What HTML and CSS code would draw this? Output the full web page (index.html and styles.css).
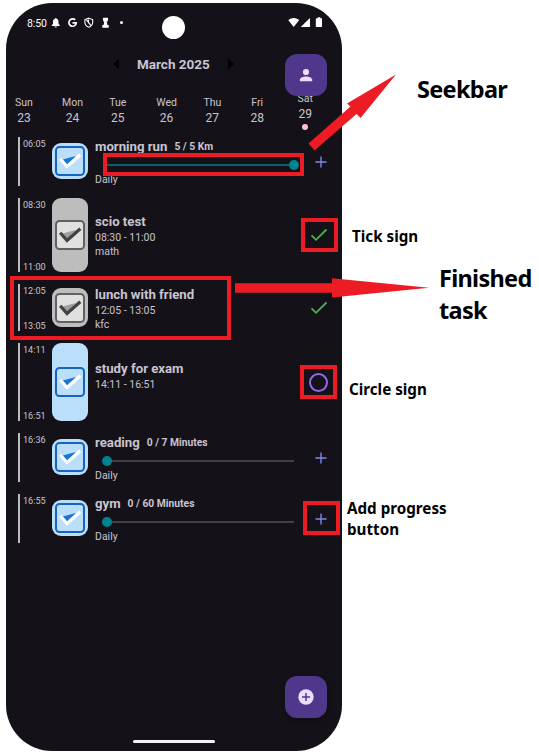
FILE: index.html
```
<!DOCTYPE html>
<html lang="en">
<head>
<meta charset="utf-8">
<title>March 2025 schedule</title>
<link rel="stylesheet" href="styles.css">
</head>
<body>
<svg width="0" height="0" class="defs" aria-hidden="true">
  <symbol id="task" viewBox="0 0 30 30">
    <rect class="box" x="1" y="1" width="28" height="28" rx="3.500"/>
    <path class="fill" d="M7.500 13.600 21 10 12 19.500z"/>
    <path class="tick" d="M5.200 12.800 12 20.500 25.300 8.800"/>
  </symbol>
  <symbol id="plus" viewBox="0 0 12 12"><path d="M6 .5v11M.5 6h11"/></symbol>
  <symbol id="done" viewBox="0 0 18 14"><path d="M1.500 7.300 6 11.800 16.500 1.500"/></symbol>
</svg>
<main class="canvas">
  <div class="phone">
    <header class="status">
      <span class="clock">8:50</span>
      <svg class="status-left" viewBox="0 0 76 12">
        <path fill="#fff" d="M.8 9V8L2 6.900V4.600C2 3 2.900 2 4.200 1.700V.9h1.200v.8C6.800 2 7.500 3 7.500 4.600v2.300L8.700 8v1zM3.600 9.500h2.300c0 1.300-2.300 1.300-2.300 0z"/>
        <path fill="none" stroke="#fff" stroke-width="1.700" d="M24.200 2.900A3.700 3.700 0 1 0 25.300 5.800H21.500"/>
        <path fill="none" stroke="#fff" stroke-width="1.100" d="M37.800 1.200 41.700 2.600V5.200C41.700 7.600 40.200 9.300 37.800 10.200 35.400 9.300 33.900 7.600 33.900 5.200V2.600zM35.500 2.800l4.300 5.500M37.500 2.500v3.800"/>
        <path fill="#fff" d="M52.300.8h4.400l.5 1.300-.6 2.500h-.9l.7 3.400h1.300v2.700h-6.400V8h1.300l.7-3.400h-.9l-.6-2.500z"/>
        <circle cx="70.500" cy="5.500" r="1.500" fill="#fff"/>
      </svg>
      <span class="camera"></span>
      <svg class="status-right" viewBox="0 0 34 12">
        <path fill="#fff" d="M.2 3Q5.700-1.200 11.200 3L5.700 10zM12.700 10 22 1v9zM28.500 1.300h1.200V.3h2.600v1h1.200q.7 0 .7.700v7.300q0 .7-.7.700h-5q-.7 0-.7-.7V2q0-.7.700-.7z"/>
      </svg>
    </header>
    <div class="month">
      <svg class="arrow" viewBox="0 0 6 12"><path d="M6 .5v11L0 6z"/></svg>
      <span>March 2025</span>
      <svg class="arrow" viewBox="0 0 6 12"><path d="M0 .5v11L6 6z"/></svg>
    </div>
    <div class="week">
      <div class="day"><span>Sun</span><b>23</b></div>
      <div class="day"><span>Mon</span><b>24</b></div>
      <div class="day"><span>Tue</span><b>25</b></div>
      <div class="day"><span>Wed</span><b>26</b></div>
      <div class="day"><span>Thu</span><b>27</b></div>
      <div class="day"><span>Fri</span><b>28</b></div>
      <div class="day today"><span>Sat</span><b>29</b><i></i></div>
    </div>
    <section class="tasks">
      <article class="row habit">
        <div class="times"><span>06:05</span></div>
        <div class="chip"><svg><use href="#task"/></svg></div>
        <div class="info">
          <div class="head"><h2>morning run</h2><em>5 / 5 Km</em></div>
          <div class="seek full"><i></i></div>
          <p>Daily</p>
        </div>
        <svg class="plus"><use href="#plus"/></svg>
      </article>
      <article class="row exam">
        <div class="times"><span>08:30</span><span>11:00</span></div>
        <div class="chip tall grey"><svg><use href="#task"/></svg></div>
        <div class="info"><h2>scio test</h2><p>08:30 - 11:00</p><p>math</p></div>
        <svg class="done"><use href="#done"/></svg>
      </article>
      <article class="row lunch">
        <div class="times"><span>12:05</span><span>13:05</span></div>
        <div class="chip mid grey"><svg><use href="#task"/></svg></div>
        <div class="info"><h2>lunch with friend</h2><p>12:05 - 13:05</p><p>kfc</p></div>
        <svg class="done"><use href="#done"/></svg>
      </article>
      <article class="row study">
        <div class="times"><span>14:11</span><span>16:51</span></div>
        <div class="chip tall"><svg><use href="#task"/></svg></div>
        <div class="info"><h2>study for exam</h2><p>14:11 - 16:51</p><p></p></div>
        <span class="ring"></span>
      </article>
      <article class="row habit">
        <div class="times"><span>16:36</span></div>
        <div class="chip"><svg><use href="#task"/></svg></div>
        <div class="info">
          <div class="head"><h2>reading</h2><em>0 / 7 Minutes</em></div>
          <div class="seek"><i></i></div>
          <p>Daily</p>
        </div>
        <svg class="plus"><use href="#plus"/></svg>
      </article>
      <article class="row habit">
        <div class="times"><span>16:55</span></div>
        <div class="chip"><svg><use href="#task"/></svg></div>
        <div class="info">
          <div class="head"><h2>gym</h2><em>0 / 60 Minutes</em></div>
          <div class="seek"><i></i></div>
          <p>Daily</p>
        </div>
        <svg class="plus"><use href="#plus"/></svg>
      </article>
    </section>
    <div class="home"></div>
    <div class="fab profile"><svg viewBox="0 0 14 14"><circle cx="7" cy="4" r="3.100"/><path d="M.8 13.200v-1.400c0-2.200 3.700-3.400 6.200-3.400s6.200 1.200 6.200 3.400v1.400z"/></svg></div>
    <div class="fab add"><svg viewBox="0 0 16 16"><circle cx="8" cy="8" r="7.700"/><path class="cross" d="M8 4v8M4 8h8"/></svg></div>
  </div>

  <div class="mark m-seek"></div>
  <div class="mark m-tick"></div>
  <div class="mark m-lunch"></div>
  <div class="mark m-ring"></div>
  <div class="mark m-plus"></div>
  <svg class="pointers" viewBox="0 0 539 755">
    <path d="M308.500 143.500 350.500 106.500 347 103.500 396 74.500 360.500 118 356.500 114 314.500 150.500z"/>
    <path d="M235 283.300H332V278.300L429 287.700 332 297.500V292.700H235z"/>
  </svg>
  <div class="label big l-seek">Seekbar</div>
  <div class="label l-tick">Tick sign</div>
  <div class="label big l-task">Finished<br>task</div>
  <div class="label l-ring">Circle sign</div>
  <div class="label l-add">Add progress<br>button</div>
</main>
</body>
</html>
```
FILE: styles.css
```
* { box-sizing: border-box; }
body { margin: 0; background: #fff; font-family: Roboto, sans-serif; }
.defs { position: absolute; }
.canvas { position: relative; width: 539px; height: 755px; padding: 3px 0 0 6px; overflow: hidden; }
.phone {
  position: relative; display: flex; flex-direction: column;
  width: 336px; height: 748px; border-radius: 46px;
  background: #141218; color: #cac4d0; overflow: hidden;
}

.status { display: flex; align-items: center; height: 40px; padding: 0 20px 0 21px; color: #fff; }
.clock { width: 24px; font-size: 10.5px; letter-spacing: -0.1px; }
.status-left { width: 76px; height: 12px; }
.camera { width: 23px; height: 23px; margin: 8px 0 0 35px; border-radius: 50%; background: #fff; }
.status-right { width: 34px; height: 12px; margin-left: auto; }

.month { display: flex; align-items: center; height: 42px; padding-left: 107px; font-size: 13.5px; font-weight: 700; }
.month span { width: 73px; margin: 0 18px; white-space: nowrap; }
.arrow { width: 6px; height: 12px; }

.week { display: grid; grid-template-columns: repeat(7, 47.1px); justify-items: start; height: 52px; padding: 11px 0 0 9px; }
.day { display: flex; flex-direction: column; align-items: center; font-size: 10.5px; line-height: 14px; }
.day b { font-size: 12px; font-weight: 400; line-height: 16px; }
.today { margin-top: -4px; }
.today i { width: 6px; height: 6px; margin-top: 2px; border-radius: 50%; background: #ffc0cb; }

.tasks { display: flex; flex-direction: column; gap: 12px; padding-left: 12px; }
.row { display: flex; align-items: center; height: 49px; border-left: 2px solid #bdbdbd; }
.exam { height: 74px; }
.lunch { height: 47px; }
.study { height: 78px; }
.times { display: flex; flex-direction: column; justify-content: space-between; align-self: stretch; width: 32px; padding: 1px 0 0 3px; font-size: 9.1px; line-height: 12px; }
.exam .times span + span, .lunch .times span + span, .study .times span + span { margin-bottom: -1px; }
.chip {
  --box: #1565c0; --boxfill: #bbdefb; --fill: #1976d2; --tick: #fff;
  display: grid; place-items: center; flex: none; width: 36px; height: 36px; border-radius: 9px; background: #bbdefb;
}
.habit .chip { margin-bottom: 1px; }
.chip svg { width: 30px; height: 30px; }
.chip.tall { height: 100%; }
.chip.mid { height: 39px; }
.chip.grey { --box: #616161; --boxfill: #e0e0e0; --fill: #9e9e9e; --tick: #424242; background: #bdbdbd; }
.box { fill: var(--boxfill); stroke: var(--box); stroke-width: 2px; }
.fill { fill: var(--fill); }
.tick { fill: none; stroke: var(--tick); stroke-width: 3.2px; }

.info { display: flex; flex-direction: column; justify-content: center; align-self: stretch; width: 206px; padding: 2px 0 0 7px; }
.head { display: flex; align-items: center; gap: 7px; height: 18px; white-space: nowrap; }
h2 { margin: 0; font-size: 13.2px; line-height: 17px; font-weight: 700; white-space: nowrap; }
em { font-size: 10.3px; font-weight: 700; font-style: normal; }
p { margin: 0; height: 14px; font-size: 10.5px; line-height: 14px; }
.info h2 + p { height: 15px; line-height: 15px; }
.habit .info { justify-content: flex-start; padding-top: 1px; }
.seek { display: flex; align-items: center; flex: none; width: 187px; height: 2px; margin: 9px 0 7px 12px; background: #414045; }
.seek i { width: 10px; height: 10px; margin-left: -5px; border-radius: 50%; background: #00838f; }
.seek.full { justify-content: flex-end; background: #07616b; }
.seek.full i { margin-right: -5px; }

.plus { width: 12px; height: 12px; margin-left: 21px; fill: none; stroke: #7c88ec; stroke-width: 1.4px; }
.done { width: 18px; height: 14px; margin-left: 16px; fill: none; stroke: #4caf50; stroke-width: 1.8px; }
.ring { width: 19px; height: 19px; margin-left: 15px; border: 2px solid #9466ed; border-radius: 50%; }

.home { width: 82px; height: 3px; margin: auto auto 8px 127px; border-radius: 2px; background: #f4f4f4; }
.fab { position: absolute; left: 279px; display: grid; place-items: center; width: 42px; height: 42px; border-radius: 12px; background: #4f378b; box-shadow: 0 2px 5px #0004; fill: #eaddff; }
.profile { top: 51px; box-shadow: none; }
.add { top: 672.5px; }
.profile svg { width: 14px; height: 14px; }
.add svg { width: 16px; height: 16px; }
.cross { stroke: #4f378b; stroke-width: 1.5px; }

.mark { position: absolute; border: 4px solid #ed1c24; }
.m-seek { left: 103px; top: 153px; width: 201px; height: 23px; }
.m-tick { left: 301px; top: 218px; width: 37px; height: 34px; }
.m-lunch { left: 9.5px; top: 276px; width: 221.5px; height: 64px; }
.m-ring { left: 300px; top: 365px; width: 37px; height: 34px; }
.m-plus { left: 303px; top: 501px; width: 37px; height: 34px; }
.pointers { position: absolute; inset: 0; width: 539px; height: 755px; fill: #ed1c24; }
.label { position: absolute; color: #000; font: 700 15.2px/21px "Noto Sans", sans-serif; white-space: nowrap; }
.label.big { font-size: 23.5px; line-height: 32px; letter-spacing: -0.7px; }
.l-seek { left: 417px; top: 73px; }
.l-tick { left: 352px; top: 226px; }
.l-task { left: 439px; top: 262px; }
.l-ring { left: 349px; top: 379px; }
.l-add { left: 347px; top: 498px; }
```
